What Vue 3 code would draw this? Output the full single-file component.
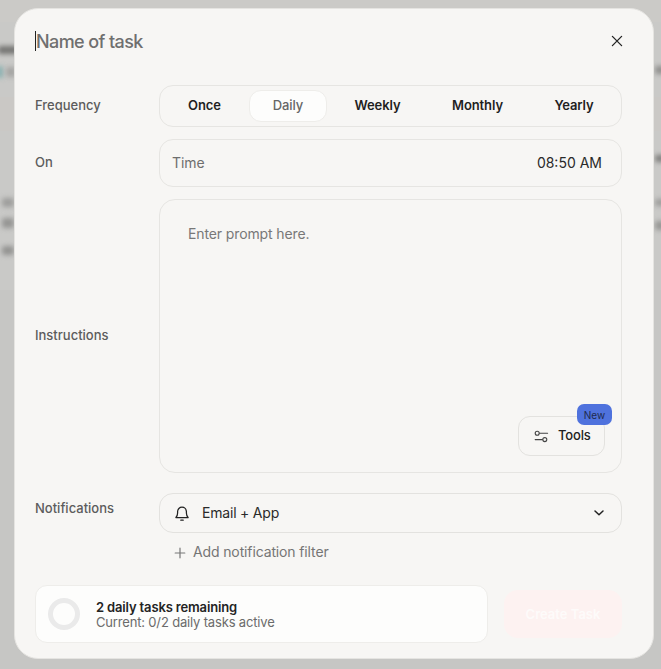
<script setup>
import { ref } from 'vue'

const options = ['Once', 'Daily', 'Weekly', 'Monthly', 'Yearly']
const frequency = ref('Daily')
</script>

<template>
  <div class="page">
    <div class="backdrop" aria-hidden="true">
      <i class="band band-a"></i>
      <i class="band band-b"></i>
      <i class="band band-c"></i>
      <i class="smudge s1"></i>
      <i class="smudge s2"></i>
      <i class="smudge s3"></i>
      <i class="smudge s4"></i>
      <i class="smudge s5"></i>
      <i class="smudge s6"></i>
      <i class="smudge r1"></i>
      <i class="smudge r2"></i>
      <i class="smudge r3"></i>
      <i class="smudge r4"></i>
    </div>

    <section class="modal">
      <header class="head">
        <div class="title"><span class="caret"></span>Name of task</div>
        <button class="close" aria-label="Close">
          <svg width="12" height="12" viewBox="0 0 12 12" fill="none" stroke="#222" stroke-width="1.3" stroke-linecap="round">
            <path d="M1.4 1.4l9.2 9.2M10.6 1.4l-9.2 9.2" />
          </svg>
        </button>
      </header>

      <div class="row row-frequency">
        <div class="label">Frequency</div>
        <div class="segments">
          <button
            v-for="o in options"
            :key="o"
            class="segment"
            :class="[`seg-${o.toLowerCase()}`, { active: frequency === o }]"
            @click="frequency = o"
          >{{ o }}</button>
        </div>
      </div>

      <div class="row row-on">
        <div class="label">On</div>
        <div class="time-box">
          <span class="time-label">Time</span>
          <span class="time-value">08:50 AM</span>
        </div>
      </div>

      <div class="row row-instructions">
        <div class="label">Instructions</div>
        <div class="prompt">
          <div class="placeholder">Enter prompt here.</div>
          <div class="tools-wrap">
            <button class="tools">
              <svg width="15" height="13" viewBox="0 0 15 13" fill="none" stroke="#444" stroke-width="1.1" stroke-linecap="round">
                <circle cx="3.2" cy="3.2" r="2" />
                <path d="M5.6 3.2h8" />
                <circle cx="10.8" cy="9.6" r="2" />
                <path d="M1.2 9.6h7.2" />
              </svg>
              <span>Tools</span>
            </button>
            <span class="badge">New</span>
          </div>
        </div>
      </div>

      <div class="row row-notify">
        <div class="label label-notify">Notifications</div>
        <div class="notify-col">
          <div class="select">
            <svg width="16" height="17" viewBox="0 0 16 17" fill="none" stroke="#222" stroke-width="1.25" stroke-linecap="round" stroke-linejoin="round">
              <path d="M1.9 12.5c1.1-1.1 1.7-2.1 1.7-4.5V6.6a4.4 4.4 0 0 1 8.8 0V8c0 2.4.6 3.4 1.7 4.5z" />
              <path d="M6.8 15.2h2.4" />
            </svg>
            <span class="select-text">Email + App</span>
            <svg class="chev" width="12" height="8" viewBox="0 0 12 8" fill="none" stroke="#222" stroke-width="1.5" stroke-linecap="round" stroke-linejoin="round">
              <path d="M2 2l4 3.8L10 2" />
            </svg>
          </div>
          <button class="add">
            <svg width="12" height="12" viewBox="0 0 12 12" fill="none" stroke="#777" stroke-width="1.2" stroke-linecap="round">
              <path d="M6 1.2v9.6M1.2 6h9.6" />
            </svg>
            <span>Add notification filter</span>
          </button>
        </div>
      </div>

      <footer class="foot">
        <div class="quota">
          <span class="ring"></span>
          <div class="quota-text">
            <div class="quota-title">2 daily tasks remaining</div>
            <div class="quota-sub">Current: 0/2 daily tasks active</div>
          </div>
        </div>
        <button class="create">Create Task</button>
      </footer>
    </section>
  </div>
</template>

<style>
html, body { margin: 0; padding: 0; }
</style>

<style scoped>
* { box-sizing: border-box; }
button { font: inherit; border: 0; background: none; padding: 0; color: inherit; }

.page {
  position: relative;
  width: 661px;
  height: 669px;
  overflow: hidden;
  background: #c9c9c7;
  font-family: Inter, "Liberation Sans", sans-serif;
  padding: 8px 7px 10px 14px;
}

.backdrop { position: absolute; inset: 0; overflow: hidden; }
.band { position: absolute; left: 0; right: 0; }
.band-a { top: 0; height: 22px; background: #cbcac7; }
.band-b { top: 97px; height: 34px; background: #cac8c5; }
.band-c { top: 290px; height: 379px; background: #c6c6c4; }
.smudge { position: absolute; background: #8f8f8d; filter: blur(2.5px); border-radius: 2px; }
.s1 { left: -2px; top: 46px; width: 20px; height: 8px; background: #747472; }
.s2 { left: -3px; top: 66px; width: 6px; height: 12px; background: #86b0b0; }
.s3 { left: 6px; top: 67px; width: 10px; height: 10px; background: #a5a5a3; }
.s4 { left: 2px; top: 198px; width: 12px; height: 9px; background: #9d9d9b; }
.s5 { left: 2px; top: 218px; width: 12px; height: 10px; background: #959593; }
.s6 { left: 2px; top: 246px; width: 12px; height: 9px; background: #939391; }
.r1 { left: 655px; top: 66px; width: 10px; height: 8px; background: #8e8e8c; }
.r2 { left: 655px; top: 155px; width: 10px; height: 7px; background: #7c7c7a; }
.r3 { left: 655px; top: 199px; width: 10px; height: 7px; background: #9b9b99; }
.r4 { left: 655px; top: 221px; width: 10px; height: 9px; background: #969694; }

.modal {
  position: relative;
  width: 640px;
  height: 651px;
  background: #f7f6f4;
  border: 1px solid #e5e4e1;
  border-radius: 24px;
  padding: 0 31px 0 20px;
  display: flex;
  flex-direction: column;
}

.head {
  height: 76px;
  display: flex;
  align-items: flex-start;
  justify-content: space-between;
  padding-top: 20px;
}
.title {
  display: flex;
  align-items: center;
  height: 24px;
  font-size: 18px;
  font-weight: 550;
  color: #6f6f6f;
  letter-spacing: -0.6px;
}
.caret { width: 1px; height: 20px; background: #222; margin-right: 0; }
.close {
  display: flex;
  margin-top: 6px;
  margin-right: -1px;
}

.row { display: flex; }
.label {
  width: 124px;
  flex: none;
  font-size: 13px;
  font-weight: 550;
  color: #5c5c5c;
  line-height: 16px;
  display: flex;
  align-items: center;
  padding-bottom: 2px;
}
.label-notify { align-items: flex-start; padding-top: 7px; }

.row-frequency { height: 42px; margin-bottom: 12px; }
.segments {
  flex: 1;
  display: flex;
  align-items: center;
  border: 1px solid #e6e5e2;
  border-radius: 14px;
  padding: 4px 0;
}
.segment {
  height: 32px;
  flex: none;
  font-size: 13px;
  font-weight: 600;
  color: #1f1f1f;
  border-radius: 12px;
  border: 1px solid transparent;
  padding-bottom: 2px;
  letter-spacing: -0.1px;
}
.seg-once { width: 89px; }
.seg-daily { width: 78px; }
.seg-weekly { width: 101px; }
.seg-monthly { width: 99px; }
.seg-yearly { width: 94px; }
.segment.active {
  background: #fdfdfc;
  border-color: #eeedea;
  color: #666;
  font-weight: 500;
}

.row-on { height: 48px; margin-bottom: 12px; }
.time-box {
  flex: 1;
  display: flex;
  align-items: center;
  justify-content: space-between;
  border: 1px solid #e6e5e2;
  border-radius: 14px;
  padding: 0 19px 2px 12px;
}
.time-label { font-size: 14px; color: #6e6e6e; letter-spacing: -0.1px; }
.time-value { font-size: 14px; color: #2a2a2a; }

.row-instructions { height: 274px; margin-bottom: 20px; }
.prompt {
  flex: 1;
  position: relative;
  display: flex;
  flex-direction: column;
  justify-content: space-between;
  border: 1px solid #e6e5e2;
  border-radius: 16px;
  padding: 25px 16px 16px 28px;
}
.placeholder { font-size: 14px; line-height: 17px; color: #787878; letter-spacing: -0.12px; }
.tools-wrap { position: relative; align-self: flex-end; }
.tools {
  width: 87px;
  height: 40px;
  display: flex;
  align-items: center;
  gap: 9px;
  padding-left: 15px;
  border: 1px solid #e3e2df;
  border-radius: 12px;
  font-size: 13px;
  font-weight: 500;
  color: #222;
  letter-spacing: -0.15px;
}
.tools span { position: relative; top: -1px; }
.badge {
  position: absolute;
  top: -12px;
  right: -7px;
  width: 35px;
  height: 21px;
  display: flex;
  align-items: center;
  justify-content: center;
  background: #4f72dd;
  border-radius: 7px;
  font-size: 10px;
  color: #1e2a4d;
}

.row-notify { height: 92px; }
.notify-col { flex: 1; display: flex; flex-direction: column; }
.select {
  height: 40px;
  display: flex;
  align-items: center;
  border: 1px solid #e3e2df;
  border-radius: 14px;
  padding: 0 16px 0 14px;
}
.select-text { margin-left: 12px; font-size: 14px; color: #2a2a2a; letter-spacing: -0.2px; padding-bottom: 2px; }
.chev { margin-left: auto; }
.add {
  display: flex;
  align-items: center;
  gap: 7px;
  height: 17px;
  margin-top: 10px;
  margin-left: 15px;
  font-size: 14px;
  color: #757575;
  letter-spacing: -0.13px;
}
.add svg { position: relative; top: 1px; }

.foot {
  display: flex;
  align-items: center;
  gap: 16px;
}
.quota {
  width: 453px;
  height: 58px;
  display: flex;
  align-items: center;
  gap: 16px;
  padding-left: 12px;
  background: #fdfdfc;
  border: 1px solid #eeedea;
  border-radius: 12px;
}
.ring {
  width: 32px;
  height: 32px;
  flex: none;
  border-radius: 50%;
  border: 5px solid #eaeaea;
}
.quota-text { padding-top: 1px; }
.quota-title { font-size: 13px; line-height: 15px; font-weight: 600; color: #232323; letter-spacing: -0.15px; }
.quota-sub { font-size: 13px; line-height: 14px; color: #6b6b6b; letter-spacing: -0.17px; }
.create {
  width: 118px;
  height: 48px;
  background: #fdf2f1;
  border-radius: 14px;
  font-size: 13px;
  font-weight: 600;
  color: #fdfbfa;
}
</style>
